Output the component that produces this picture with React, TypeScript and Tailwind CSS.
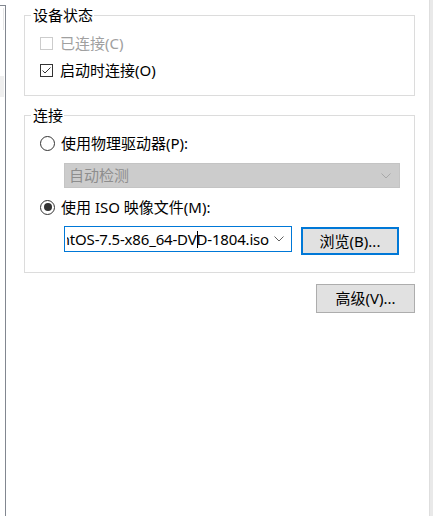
import React from "react";

const font = { fontFamily: '"Noto Sans", "Noto Sans CJK SC", sans-serif' };

const Chevron = ({ color = "#606060" }: { color?: string }) => (
  <svg width="10" height="6" viewBox="0 0 10 6" className="shrink-0">
    <polyline points="0.5,0.5 5,5 9.5,0.5" fill="none" stroke={color} strokeWidth="1" />
  </svg>
);

const CheckBox = ({ checked, disabled }: { checked?: boolean; disabled?: boolean }) => (
  <span
    className={`w-[13px] h-[13px] border bg-white flex items-center justify-center shrink-0 ${
      disabled ? "border-[#cccccc]" : "border-[#333333]"
    }`}
  >
    {checked && (
      <svg width="11" height="11" viewBox="0 0 11 11">
        <polyline points="1.5,5.5 4,8 9.5,2.5" fill="none" stroke="#333333" strokeWidth="1" />
      </svg>
    )}
  </span>
);

const Radio = ({ checked }: { checked?: boolean }) => (
  <span className="w-[15px] h-[15px] rounded-full border border-[#333333] bg-white flex items-center justify-center shrink-0">
    {checked && <span className="w-[8px] h-[8px] rounded-full bg-[#333333]" />}
  </span>
);

const GroupBox = ({ title, className = "", children }: { title: string; className?: string; children: React.ReactNode }) => (
  <fieldset className={`border border-[#dcdcdc] pl-[15px] ${className}`}>
    <legend className="ml-[-9px] pl-[2px] pr-[1px] leading-[20px]">{title}</legend>
    {children}
  </fieldset>
);

export default function App() {
  return (
    <div style={font} className="w-[433px] h-[516px] bg-white flex overflow-hidden text-[15px] text-black">
      {/* edge of the device list on the left */}
      <div className="w-[6px] mt-[5px] border-t border-r border-[#828790] flex flex-col">
        <div className="ml-[3px] mt-[2px] w-px h-[22px] bg-[#e6e6e6]" />
        <div className="mt-[46px] w-[4px] h-[21px] bg-[#efefef]" />
      </div>

      <div className="flex-1 pt-[5px] pl-[18px] pr-[14px]">
        <GroupBox title="设备状态" className="pt-[5px] pb-[11px]">
          <div className="h-[27px] flex items-center gap-[7px] text-[#a0a0a0]">
            <CheckBox disabled />
            <span>已连接(C)</span>
          </div>
          <div className="h-[27px] flex items-center gap-[7px]">
            <CheckBox checked />
            <span>启动时连接(O)</span>
          </div>
        </GroupBox>

        <GroupBox title="连接" className="mt-[9px] pt-[6px] pb-[17px] pr-[14px]">
          <div className="h-[24px] flex items-center gap-[6px]">
            <Radio />
            <span>使用物理驱动器(P):</span>
          </div>
          <div className="mt-[8px] ml-[24px] h-[25px] bg-[#cccccc] border border-[#c4c4c4] flex items-center justify-between pl-[4px] pr-[8px] text-[#8e8e8e]">
            <span>自动检测</span>
            <Chevron color="#a8a8a8" />
          </div>
          <div className="mt-[7px] h-[24px] flex items-center gap-[6px]">
            <Radio checked />
            <span>使用 ISO 映像文件(M):</span>
          </div>
          <div className="mt-[7px] ml-[24px] flex items-start">
            <div className="w-[228px] h-[26px] border border-[#0078d7] bg-white flex items-center pl-[2px] pr-[7px]">
              <div className="w-[202px] flex justify-end overflow-hidden whitespace-nowrap">
                <span className="shrink-0 inline-flex items-center tracking-[-0.18px]">
                  CentOS-7.5-x86_64-DV
                  <span className="inline-block w-px h-[17px] bg-black -mr-px" />
                  D-1804.iso
                </span>
              </div>
              <span className="flex-1" />
              <Chevron />
            </div>
            <button className="ml-[9px] mt-[1px] w-[98px] h-[28px] border-2 border-[#0078d7] bg-[#e1e1e1] flex items-center justify-center">
              浏览(B)...
            </button>
          </div>
        </GroupBox>

        <div className="mt-[11px] flex justify-end">
          <button className="w-[99px] h-[29px] border border-[#adadad] bg-[#e1e1e1] flex items-center justify-center">
            高级(V)...
          </button>
        </div>
      </div>

      {/* window edge on the right */}
      <div className="w-[4px] bg-[#e9e9e9] border-l border-[#dedede]" />
    </div>
  );
}
